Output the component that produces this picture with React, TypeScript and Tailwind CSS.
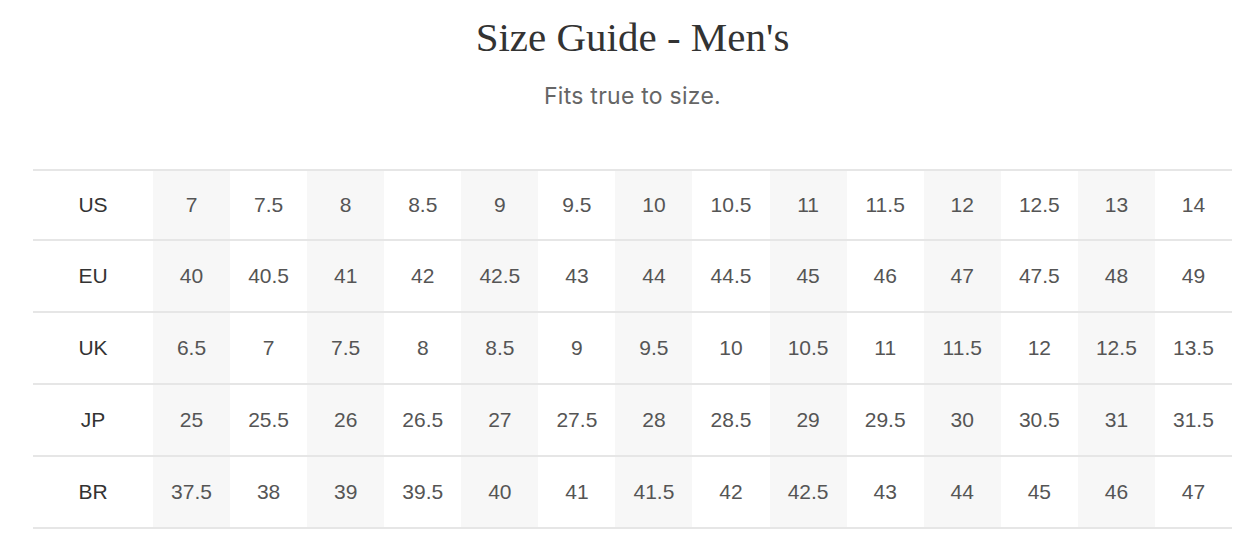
import React from 'react'

const labels = ['US', 'EU', 'UK', 'JP', 'BR']

const sizes: string[][] = [
  ['7', '7.5', '8', '8.5', '9', '9.5', '10', '10.5', '11', '11.5', '12', '12.5', '13', '14'],
  ['40', '40.5', '41', '42', '42.5', '43', '44', '44.5', '45', '46', '47', '47.5', '48', '49'],
  ['6.5', '7', '7.5', '8', '8.5', '9', '9.5', '10', '10.5', '11', '11.5', '12', '12.5', '13.5'],
  ['25', '25.5', '26', '26.5', '27', '27.5', '28', '28.5', '29', '29.5', '30', '30.5', '31', '31.5'],
  ['37.5', '38', '39', '39.5', '40', '41', '41.5', '42', '42.5', '43', '44', '45', '46', '47']
]

export default function App() {
  return (
    <div className="w-[1245px] h-[559px] bg-white overflow-hidden">
      <div className="ml-[33px] w-[1199px]">
        <h1 className="pt-[17px] text-center text-[41px] leading-[40px] text-[#333] font-['Liberation_Serif',serif] font-normal">
          Size Guide - Men's
        </h1>
        <p className="mt-[24px] text-center text-[23px] leading-[30px] tracking-[0.25px] text-[#666] font-['Inter',sans-serif]">
          Fits true to size.
        </p>

        <div className="mt-[58px] border-t-2 border-[#e6e6e6] font-['Liberation_Sans',sans-serif] text-[21px]">
          {labels.map((label, r) => (
            <div
              key={label}
              className={`grid grid-cols-[120px_repeat(14,1fr)] border-b-2 border-[#e6e6e6] ${
                r === 0 ? 'h-[70px]' : 'h-[72px]'
              }`}
            >
              <div className="flex items-center justify-center text-[#333]">{label}</div>
              {sizes[r].map((s, c) => (
                <div
                  key={c}
                  className={`flex items-center justify-center text-[#555] ${
                    c % 2 === 0 ? 'bg-[#f7f7f7]' : ''
                  }`}
                >
                  {s}
                </div>
              ))}
            </div>
          ))}
        </div>
      </div>
    </div>
  )
}
